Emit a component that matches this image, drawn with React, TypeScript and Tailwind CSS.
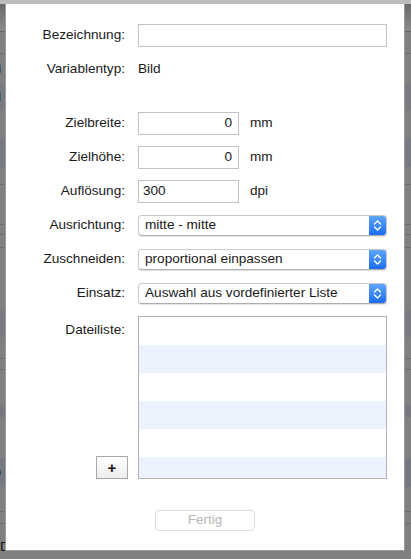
import React from 'react';

const Chevrons: React.FC = () => (
  <svg width="9" height="13" viewBox="0 0 9 13" fill="none">
    <path d="M1.5 5 L4.5 2 L7.5 5" stroke="white" strokeWidth="1.4" strokeLinecap="round" strokeLinejoin="round" />
    <path d="M1.5 8 L4.5 11 L7.5 8" stroke="white" strokeWidth="1.4" strokeLinecap="round" strokeLinejoin="round" />
  </svg>
);

const Row: React.FC<{ label: string; children?: React.ReactNode; className?: string }> = ({ label, children, className = '' }) => (
  <div className={`flex items-center h-[23px] ${className}`}>
    <div className="w-[119px] whitespace-nowrap text-right text-[13.6px] text-[#1a1a1a]">{label}</div>
    <div className="ml-[13px] flex items-center">{children}</div>
  </div>
);

const PopUp: React.FC<{ value: string; focused?: boolean }> = ({ value, focused }) => (
  <div
    className={`flex h-[21px] w-[249px] items-stretch overflow-hidden rounded-[4px] border border-[#c9c9c9] border-b-[#aeaeae] bg-white shadow-[0_1px_1px_rgba(0,0,0,0.12)] ${
      focused ? 'shadow-[0_0_0_3px_#8ab4f3]' : ''
    }`}
  >
    <div className="flex flex-1 items-center whitespace-nowrap pl-[6px] text-[13.6px] text-[#1a1a1a]">{value}</div>
    <div className="flex w-[17px] items-center justify-center bg-gradient-to-b from-[#5ea5fb] to-[#1b6cf3]">
      <Chevrons />
    </div>
  </div>
);

const BgRow: React.FC<{ h: string; className?: string; left?: string }> = ({ h, className = '', left }) => (
  <div className={`relative flex items-center ${h} ${className}`}>
    {left && <span className="-ml-[9px] text-[13px] text-[#111]">{left}</span>}
  </div>
);

const App: React.FC = () => {
  const listRows = [0, 1, 2, 3, 4, 5];
  return (
    <div className="relative h-[559px] w-[411px] overflow-hidden bg-[#808080] font-['Liberation_Sans',Arial,sans-serif]">
      {/* dimmed window behind the sheet */}
      <div className="flex flex-col">
        <div className="h-[4px] bg-[#bdbdbd]" />
        <div className="h-[28px] border-b border-[#646464] bg-gradient-to-b from-[#6a6a6a] to-[#8a8a8a]" />
        <BgRow h="h-[22px]" className="border-b border-[#6c6c6c]" />
        <BgRow h="h-[29px]" left="ei" />
        <BgRow h="h-[27px]" className="bg-[#797b81]" left="ei" />
        <BgRow h="h-[28px]" />
        <BgRow h="h-[29px]" className="bg-[#777a80]" />
        <BgRow h="h-[18px]" className="border-b border-[#6c6c6c]" />
        <BgRow h="h-[40px]" className="border-b border-[#6c6c6c]" />
        <BgRow h="h-[10px]" className="border-b border-[#6c6c6c]" left="V" />
        <BgRow h="h-[13px]" className="border-b border-[#6c6c6c]" />
        <BgRow h="h-[62px]" />
        <BgRow h="h-[27px]" className="bg-[#7a7b80]" />
        <BgRow h="h-[22px]" className="border-b border-[#6c6c6c]" />
        <BgRow h="h-[11px]" className="border-b border-[#6c6c6c]" />
        <BgRow h="h-[18px]" left="D" />
        <BgRow h="h-[17px]" left="Z" />
        <BgRow h="h-[12px]" className="bg-[#77797f]" left="V" />
        <BgRow h="h-[16px]" />
        <BgRow h="h-[25px]" left="S" />
        <BgRow h="h-[29px]" className="bg-[#76797f]" left="Q" />
        <BgRow h="h-[25px]" className="border-b border-[#6c6c6c]" />
        <BgRow h="h-[12px]" className="border-b border-[#6c6c6c]" />
        <div className="h-[13px]" />
        <div className="flex h-[20px] items-center gap-[20px] whitespace-nowrap text-[13.6px] text-[#111]">
          <span>Dokument-Infoschlüssel</span>
          <span>Wert</span>
        </div>
      </div>

      {/* sheet */}
      <div className="absolute left-[5px] top-[4px] flex h-[547px] w-[400px] flex-col border-x border-b border-[#9c9c9c] bg-white pt-[20px]">
        <Row label="Bezeichnung:">
          <div className="h-[23px] w-[249px] border border-[#c3c3c3] bg-white" />
        </Row>
        <Row label="Variablentyp:" className="mt-[11px]">
          <span className="text-[13.6px] text-[#1a1a1a]">Bild</span>
        </Row>
        <Row label="Zielbreite:" className="mt-[31px]">
          <div className="flex h-[23px] w-[101px] items-center justify-end border border-[#c3c3c3] pr-[6px] text-[13.6px] text-[#1a1a1a]">0</div>
          <span className="ml-[11px] text-[13.6px] text-[#1a1a1a]">mm</span>
        </Row>
        <Row label="Zielhöhe:" className="mt-[11px]">
          <div className="flex h-[23px] w-[101px] items-center justify-end border border-[#c3c3c3] pr-[6px] text-[13.6px] text-[#1a1a1a]">0</div>
          <span className="ml-[11px] text-[13.6px] text-[#1a1a1a]">mm</span>
        </Row>
        <Row label="Auflösung:" className="mt-[11px]">
          <div className="flex h-[23px] w-[101px] items-center border border-[#c3c3c3] pl-[4px] text-[13.6px] text-[#1a1a1a]">300</div>
          <span className="ml-[11px] text-[13.6px] text-[#1a1a1a]">dpi</span>
        </Row>
        <Row label="Ausrichtung:" className="mt-[11px]">
          <PopUp value="mitte - mitte" />
        </Row>
        <Row label="Zuschneiden:" className="mt-[11px]">
          <PopUp value="proportional einpassen" />
        </Row>
        <Row label="Einsatz:" className="mt-[11px]">
          <PopUp value="Auswahl aus vordefinierter Liste" focused />
        </Row>

        <div className="mt-[11px] flex h-[163px]">
          <div className="flex w-[122px] flex-col items-end justify-between">
            <span className="mr-[3px] pt-[4px] text-[13.6px] text-[#1a1a1a]">Dateiliste:</span>
            <button className="flex h-[23px] w-[32px] items-center justify-center border border-[#a9a9a9] bg-gradient-to-b from-white to-[#ededed] text-[15px] font-bold leading-none text-[#111]">
              +
            </button>
          </div>
          <div className="ml-[10px] flex w-[249px] flex-col overflow-hidden border border-[#b1b1b1]">
            {listRows.map((i) => (
              <div key={i} className={`h-[28px] shrink-0 ${i % 2 === 1 ? 'bg-[#edf3fe]' : 'bg-white'}`} />
            ))}
          </div>
        </div>

        <div className="mt-[31px] flex justify-center">
          <button className="flex h-[21px] w-[100px] items-center justify-center rounded-[4px] border border-[#dcdcdc] bg-white text-[13.6px] text-[#b8b8b8]">
            Fertig
          </button>
        </div>
      </div>
    </div>
  );
};

export default App;
